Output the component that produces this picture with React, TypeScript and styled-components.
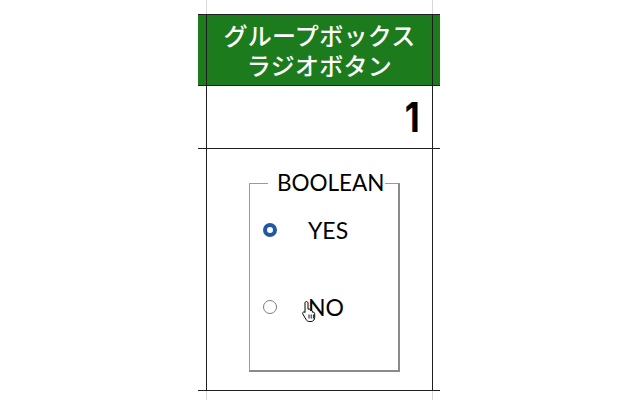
import React from "react";
import styled, { createGlobalStyle } from "styled-components";

const Global = createGlobalStyle`
  html, body { margin: 0; padding: 0; background: #ffffff; }
  body { font-family: "Liberation Sans", Arial, sans-serif; }
`;

const Page = styled.div`
  width: 640px;
  height: 400px;
  overflow: hidden;
  box-sizing: border-box;
  padding-left: 198px;
  display: flex;
  background: #ffffff;
`;

const Sheet = styled.div`
  width: 242px;
  display: flex;
  flex-direction: column;
`;

const Row = styled.div<{ $h: number; $ruled?: boolean; $fill?: string }>`
  display: grid;
  grid-template-columns: 8px 227px 7px;
  height: ${(p) => p.$h}px;
  flex: none;
  box-sizing: border-box;
  border-top: ${(p) => (p.$ruled ? "1px solid #1e1e1e" : "none")};
  background: ${(p) => p.$fill ?? "transparent"};
`;

const Stub = styled.div``;

const Cell = styled.div<{ $light?: boolean }>`
  position: relative;
  min-width: 0;
  box-sizing: border-box;
  border-left: 1px solid ${(p) => (p.$light ? "#d9d9d9" : "#1e1e1e")};
  border-right: 1px solid ${(p) => (p.$light ? "#d9d9d9" : "#1e1e1e")};
`;

const HeaderCell = styled(Cell)`
  display: flex;
  flex-direction: column;
  align-items: center;
  justify-content: center;
  color: #ffffff;
  font-family: "Noto Sans CJK JP", "Noto Sans", sans-serif;
  font-weight: 500;
  font-size: 24px;
  line-height: 30px;
  letter-spacing: 0.3px;
`;

const HeaderLine = styled.span`
  display: block;
  white-space: nowrap;
`;

const ValueCell = styled(Cell)`
  display: flex;
  align-items: center;
  justify-content: flex-end;
  padding-right: 12px;
  padding-top: 1px;
`;

const ValueText = styled.span`
  font-family: Inter, Roboto, sans-serif;
  font-weight: 700;
  font-size: 41px;
  line-height: 1;
  color: #000000;
  transform: scaleX(0.85);
  transform-origin: right center;
`;

const ControlCell = styled(Cell)`
  padding: 22px 0 0 42px;
`;

const GroupBox = styled.fieldset`
  margin: 0;
  padding: 0;
  width: 151px;
  height: 201px;
  box-sizing: border-box;
  border: 1px solid #9a9a9a;
  border-right: 2px solid #8a8a8a;
  border-bottom: 2px solid #8a8a8a;
  font-family: Lato, "Liberation Sans", sans-serif;
`;

const Legend = styled.legend`
  margin-left: 18px;
  padding: 0 0 0 9px;
  font-size: 22.5px;
  line-height: 24px;
  color: #000000;
`;

const Options = styled.div`
  display: flex;
  flex-direction: column;
  gap: 47px;
  padding: 20px 0 0 13px;
`;

const Option = styled.label`
  position: relative;
  display: flex;
  align-items: center;
  gap: 31px;
  height: 30px;
  font-size: 23px;
  color: #000000;
`;

const Radio = styled.span<{ $checked?: boolean }>`
  width: 14px;
  height: 14px;
  flex: none;
  box-sizing: border-box;
  border-radius: 50%;
  background: #ffffff;
  border: ${(p) => (p.$checked ? "4.5px solid #1f58a6" : "1.5px solid #7d7d7d")};
`;

const Pointer = styled.svg`
  position: absolute;
  left: 38px;
  top: 8px;
`;

function HandCursor() {
  return (
    <Pointer width="18" height="23" viewBox="0 0 18 23">
      <path
        d="M5.5 1.5c.8 0 1.5.7 1.5 1.5v6.2l.9-.2c.8 0 1.5.6 1.5 1.4v.3l.8-.2c.8 0 1.4.6 1.4 1.4v.4l.7-.1c.8 0 1.4.6 1.4 1.4V17.5c0 2.2-1.6 4-3.6 4H8.2c-1.2 0-2.2-.6-2.8-1.5L1.8 14c-.4-.7-.2-1.5.5-1.9.6-.3 1.3-.2 1.7.3L4 12.5V3c0-.8.7-1.5 1.5-1.5z"
        fill="#ffffff"
        stroke="#000000"
        strokeWidth="1"
        strokeLinejoin="round"
      />
      <path d="M8 14.5v4M10.2 14.5v4M12.4 14.5v4" stroke="#000000" strokeWidth="0.9" />
    </Pointer>
  );
}

export default function App() {
  return (
    <>
      <Global />
      <Page>
        <Sheet>
          <Row $h={14}>
            <Stub />
            <Cell $light />
            <Stub />
          </Row>
          <Row $h={71} $ruled $fill="#1c7b1c">
            <Stub />
            <HeaderCell>
              <HeaderLine>グループボックス</HeaderLine>
              <HeaderLine>ラジオボタン</HeaderLine>
            </HeaderCell>
            <Stub />
          </Row>
          <Row $h={63} $ruled>
            <Stub />
            <ValueCell>
              <ValueText>1</ValueText>
            </ValueCell>
            <Stub />
          </Row>
          <Row $h={242} $ruled>
            <Stub />
            <ControlCell>
              <GroupBox>
                <Legend>BOOLEAN</Legend>
                <Options>
                  <Option>
                    <Radio $checked />
                    <span>YES</span>
                  </Option>
                  <Option>
                    <Radio />
                    <span>NO</span>
                    <HandCursor />
                  </Option>
                </Options>
              </GroupBox>
            </ControlCell>
            <Stub />
          </Row>
          <Row $h={10} $ruled>
            <Stub />
            <Cell $light />
            <Stub />
          </Row>
        </Sheet>
      </Page>
    </>
  );
}
